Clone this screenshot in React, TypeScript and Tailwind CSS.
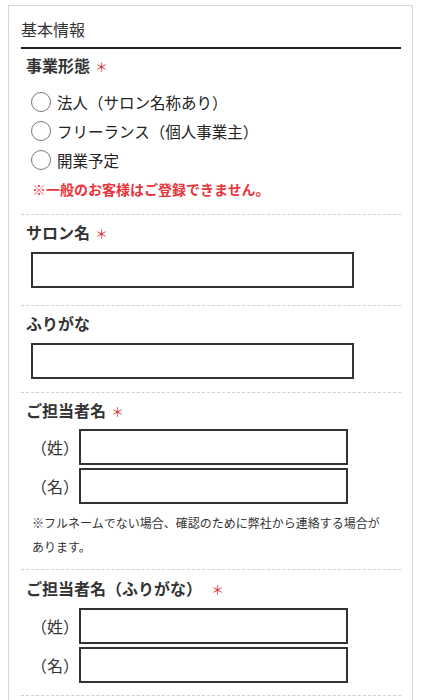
import React from "react";

const font = { fontFamily: '"Noto Sans CJK JP", "Noto Sans", sans-serif' };

function Req() {
  return <span className="ml-[5px] text-[13px] leading-none font-normal text-[#d8343c]">＊</span>;
}

function Radio({ label }: { label: string }) {
  return (
    <label className="flex h-[29px] items-center pl-[10px]">
      <span className="h-[20px] w-[20px] rounded-full border-[1.5px] border-[#777] bg-white" />
      <span className="ml-[6px] text-[15.5px] leading-[24px] text-[#222]">{label}</span>
    </label>
  );
}

function NameRow({ label }: { label: string }) {
  return (
    <div className="flex items-center pl-[10px]">
      <span className="w-[48px] text-right text-[16px] leading-[24px] text-[#333]">{label}</span>
      <input className="block h-[36px] w-[269px] border-2 border-[#333] bg-white outline-none" />
    </div>
  );
}

export default function App() {
  return (
    <div className="min-h-[700px] bg-white pt-[5px]" style={font}>
      <div className="ml-[8px] w-[405px] min-h-[700px] border border-[#d4d4d4] pl-[12px] pr-[11px]">
        {/* header */}
        <div className="border-b-2 border-[#222] pt-[11px] pb-[6px]">
          <h2 className="text-[16px] leading-[24px] font-normal text-[#333]">基本情報</h2>
        </div>

        {/* 事業形態 */}
        <div className="border-b border-dashed border-[#cfcfcf] pb-[13px]">
          <div className="mt-[4px] h-[24px] pl-[5px] text-[16px] leading-[24px] font-bold text-[#333]">
            事業形態<Req />
          </div>
          <div className="mt-[10px] flex flex-col">
            <Radio label="法人（サロン名称あり）" />
            <Radio label="フリーランス（個人事業主）" />
            <Radio label="開業予定" />
          </div>
          <p className="mt-[3px] pl-[11px] text-[14px] leading-[24px] font-bold text-[#e8343c]">
            ※一般のお客様はご登録できません。
          </p>
        </div>

        {/* サロン名 */}
        <div className="border-b border-dashed border-[#cfcfcf] pt-[5px] pb-[17px]">
          <div className="h-[24px] pl-[5px] text-[16px] leading-[24px] font-bold text-[#333]">
            サロン名<Req />
          </div>
          <div className="mt-[8px] pl-[10px]">
            <input className="block h-[36px] w-[323px] border-2 border-[#333] bg-white outline-none" />
          </div>
        </div>

        {/* ふりがな */}
        <div className="border-b border-dashed border-[#cfcfcf] pt-[5px] pb-[13px]">
          <div className="h-[24px] pl-[5px] text-[16px] leading-[24px] font-bold text-[#333]">ふりがな</div>
          <div className="mt-[8px] pl-[10px]">
            <input className="block h-[36px] w-[323px] border-2 border-[#333] bg-white outline-none" />
          </div>
        </div>

        {/* ご担当者名 */}
        <div className="border-b border-dashed border-[#cfcfcf] pt-[5px] pb-[10px]">
          <div className="h-[24px] pl-[5px] text-[16px] leading-[24px] font-bold text-[#333]">
            ご担当者名<Req />
          </div>
          <div className="mt-[7px] flex flex-col gap-[3px]">
            <NameRow label="（姓）" />
            <NameRow label="（名）" />
          </div>
          <p className="mt-[7px] max-w-[360px] pl-[11px] text-[12px] leading-[24px] text-[#333]">
            ※フルネームでない場合、確認のために弊社から連絡する場合が<br />あります。
          </p>
        </div>

        {/* ご担当者名（ふりがな） */}
        <div className="border-b border-dashed border-[#cfcfcf] pt-[6px] pb-[12px]">
          <div className="h-[24px] pl-[5px] text-[16px] leading-[24px] font-bold text-[#333]">
            ご担当者名（ふりがな）<span className="ml-[4px]" /><Req />
          </div>
          <div className="mt-[8px] flex flex-col gap-[3px]">
            <NameRow label="（姓）" />
            <NameRow label="（名）" />
          </div>
        </div>
      </div>
    </div>
  );
}
